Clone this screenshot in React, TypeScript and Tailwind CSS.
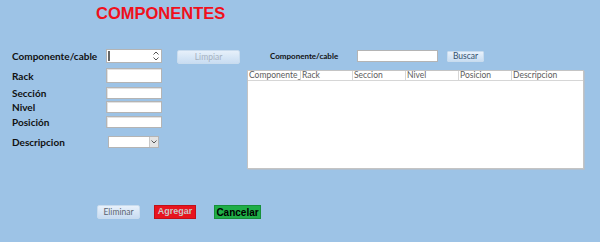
import React from "react";

const cols = [
  { name: "Componente_c", w: "w-[53px]" },
  { name: "Rack", w: "w-[52px]" },
  { name: "Seccion", w: "w-[53px]" },
  { name: "Nivel", w: "w-[53px]" },
  { name: "Posicion", w: "w-[53px]" },
  { name: "Descripcion", w: "flex-1" },
];

function Field({ h = "h-[12px]" }: { h?: string }) {
  return <div className={`w-[56px] ${h} bg-white border border-[#b4b4b4] shadow-[inset_1px_1px_0_#e2e2e2]`} />;
}

function Row({ label, mt, h, children }: { label: string; mt: string; h: string; children: React.ReactNode }) {
  return (
    <div className={`flex items-center ${mt} ${h}`}>
      <div className="w-[94px] text-[10px] font-bold text-[#111] leading-none">{label}</div>
      {children}
    </div>
  );
}

function Chevron({ up }: { up?: boolean }) {
  return (
    <svg width="6" height="4" viewBox="0 0 6 4">
      <path d={up ? "M0.5 3.5 L3 1 L5.5 3.5" : "M0.5 0.5 L3 3 L5.5 0.5"} fill="none" stroke="#555" strokeWidth="1" />
    </svg>
  );
}

export default function App() {
  return (
    <div className="w-[600px] h-[242px] bg-[#9dc3e6] flex flex-col overflow-hidden" style={{ fontFamily: "Lato, 'Liberation Sans', sans-serif" }}>
      {/* title */}
      <div className="h-[49px] pl-[96px] pt-[3px]">
        <h1 className="text-[16.5px] font-bold text-[#f0101c] leading-[20px]" style={{ fontFamily: "'Liberation Sans', Arial, sans-serif" }}>
          COMPONENTES
        </h1>
      </div>

      {/* main */}
      <div className="h-[156px] flex">
        <div className="w-[247px] pl-[12px]">
          <Row label="Componente/cable" mt="mt-0" h="h-[14px]">
            <div className="w-[56px] h-[14px] bg-white border border-[#b4b4b4] flex items-center">
              <div className="w-[2px] h-[10px] bg-[#666] ml-[1px]" />
              <div className="ml-auto mr-[2px] flex flex-col gap-[2px]">
                <Chevron up />
                <Chevron />
              </div>
            </div>
            <div className="ml-[15px] w-[63px] h-[14px] mt-[2px] rounded-[2px] border border-[#c9dcee] bg-gradient-to-b from-[#e6f0fa] to-[#c9ddf2] flex items-center justify-center text-[8.5px] text-[#a6b1bf]">
              Limpiar
            </div>
          </Row>
          <Row label="Rack" mt="mt-[5px]" h="h-[15px]">
            <Field h="h-[15px]" />
          </Row>
          <Row label="Sección" mt="mt-[4px]" h="h-[12px]">
            <Field />
          </Row>
          <Row label="Nivel" mt="mt-[2px]" h="h-[12px]">
            <Field />
          </Row>
          <Row label="Posición" mt="mt-[3px]" h="h-[12px]">
            <Field />
          </Row>
          <Row label="Descripcion" mt="mt-[8px]" h="h-[12px]">
            <div className="ml-[2px] w-[51px] h-[12px] bg-white border border-[#b4b4b4] flex justify-end">
              <div className="w-[9px] h-full bg-[#e4e4e4] border-l border-[#c8c8c8] flex items-center justify-center">
                <Chevron />
              </div>
            </div>
          </Row>
        </div>

        <div className="flex flex-col">
          <div className="flex h-[13px] items-center">
            <div className="ml-[23px] w-[87px] text-[8px] font-bold text-[#111] leading-none">Componente/cable</div>
            <div className="w-[81px] h-[12px] bg-white border border-[#b4b4b4]" />
            <div className="ml-[9px] mt-[2px] w-[37px] h-[11px] rounded-[1px] border border-[#c9dcee] bg-gradient-to-b from-[#e8f1fb] to-[#cadef2] flex items-center justify-center text-[8.5px] text-[#34506e]">
              Buscar
            </div>
          </div>
          <div className="mt-[8px] w-[337px] h-[99px] bg-white border border-[#c4c4c4] shadow-[1px_1px_0_#b0c0d0]">
            <div className="flex h-[10px] border-b border-[#d6d6d6]">
              {cols.map((c, i) => (
                <div
                  key={c.name}
                  className={`${c.w} ${i < cols.length - 1 ? "border-r border-[#d6d6d6]" : ""} pl-[1px] text-[8.5px] leading-[9px] text-[#5c5c5c] overflow-hidden whitespace-nowrap`}
                >
                  {c.name}
                </div>
              ))}
            </div>
          </div>
        </div>
      </div>

      {/* bottom buttons */}
      <div className="flex h-[14px]">
        <div className="ml-[97px] w-[43px] h-[14px] rounded-[2px] border border-[#c9dcee] bg-gradient-to-b from-[#e8f1fb] to-[#c8dcf2] flex items-center justify-center text-[8.5px] text-[#5a6470]">
          Eliminar
        </div>
        <div className="ml-[14px] w-[42px] h-[14px] bg-[#e8141e] border border-[#c01018] flex items-center justify-center text-[9px] font-bold text-[#c8c8c8]" style={{ fontFamily: "'Liberation Sans', Arial, sans-serif" }}>
          Agregar
        </div>
        <div className="ml-[18px] w-[47px] h-[14px] bg-[#1fae48] border border-[#17903a] flex items-center justify-center text-[10px] font-bold text-black" style={{ fontFamily: "'Liberation Sans', Arial, sans-serif" }}>
          Cancelar
        </div>
      </div>
    </div>
  );
}
